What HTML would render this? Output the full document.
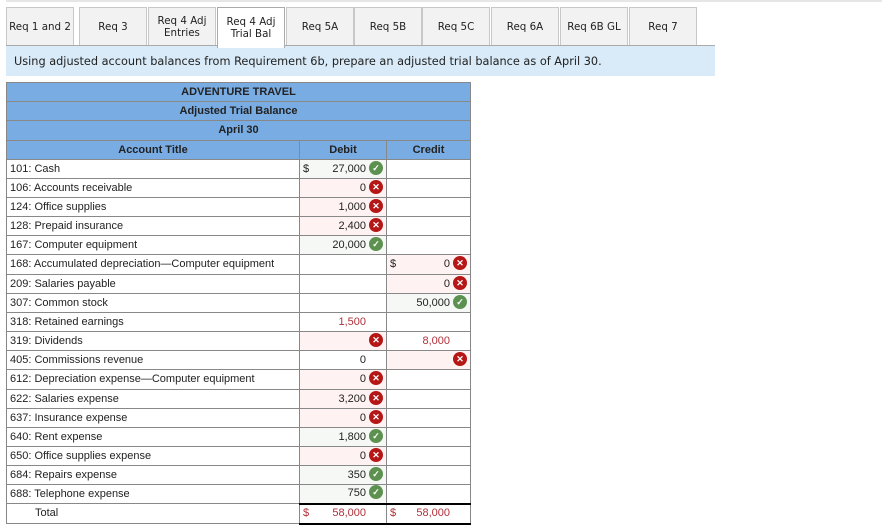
<!DOCTYPE html><html><head><style>
body{margin:0;width:882px;height:530px;background:#fff;font-family:"Liberation Sans",Arial,sans-serif;position:relative;overflow:hidden}
.topline{position:absolute;left:6px;top:0;width:876px;height:2px;background:#e6e6e6}
.tab{position:absolute;top:7px;height:38px;width:66px;background:#f2f2f2;border:1px solid #c8c8c8;border-bottom:none;font-family:"DejaVu Sans",Verdana,sans-serif;font-size:10.3px;color:#222;display:flex;align-items:center;justify-content:center;text-align:center;line-height:12px}
.tab.act{background:#fff;border-color:#aaa;height:40px;z-index:2}
.tabline{position:absolute;left:6px;top:45px;width:709px;height:1px;background:#aaa}
.banner{position:absolute;left:6px;top:46px;width:709px;height:30px;background:#d9ebf8;font-family:"DejaVu Sans",Verdana,sans-serif;font-size:11.3px;color:#222;line-height:32px;padding-left:8px;box-sizing:border-box}
table{position:absolute;left:6px;top:82px;border-collapse:collapse;font-size:11px;color:#222;table-layout:fixed}
td{border:1px solid #888;height:19px;padding:0 3px;box-sizing:border-box;white-space:nowrap;line-height:17px;overflow:hidden}
.h td{background:#79ace3;text-align:center;font-weight:bold;color:#222;height:19px}
.num{text-align:right;position:relative}
.g{background:#f5f8f4}.r{background:#fff2f2}
.ic{display:inline-block;width:14px;height:14px;border-radius:50%;vertical-align:middle;margin:-2px 0 0 3px;color:#fff;font-size:9px;line-height:14px;text-align:center;font-weight:bold}
.ok{background:#5c9150}.bad{background:#b51616}
.d{position:absolute;left:3px}
.red{color:#b0303a}
</style></head><body>
<div class="topline"></div>
<div class="tab" style="left:6px">Req 1 and 2</div>
<div class="tab" style="left:79px">Req 3</div>
<div class="tab" style="left:148px">Req 4 Adj<br>Entries</div>
<div class="tab act" style="left:217px">Req 4 Adj<br>Trial Bal</div>
<div class="tab" style="left:286px">Req 5A</div>
<div class="tab" style="left:354px">Req 5B</div>
<div class="tab" style="left:422px">Req 5C</div>
<div class="tab" style="left:491px">Req 6A</div>
<div class="tab" style="left:560px">Req 6B GL</div>
<div class="tab" style="left:629px">Req 7</div>
<div class="tabline"></div>
<div class="banner">Using adjusted account balances from Requirement 6b, prepare an adjusted trial balance as of April 30.</div>
<table>
<colgroup><col style="width:293px"><col style="width:87px"><col style="width:84px"></colgroup>
<tr class="h"><td colspan="3">ADVENTURE TRAVEL</td></tr>
<tr class="h"><td colspan="3">Adjusted Trial Balance</td></tr>
<tr class="h"><td colspan="3" style="height:20px">April 30</td></tr>
<tr class="h"><td>Account Title</td><td>Debit</td><td>Credit</td></tr>
<tr><td>101: Cash</td><td class="num g"><span class="d">$</span>27,000<span class="ic ok">✓</span></td><td></td></tr>
<tr><td>106: Accounts receivable</td><td class="num r">0<span class="ic bad">✕</span></td><td></td></tr>
<tr><td>124: Office supplies</td><td class="num r">1,000<span class="ic bad">✕</span></td><td></td></tr>
<tr><td>128: Prepaid insurance</td><td class="num r">2,400<span class="ic bad">✕</span></td><td></td></tr>
<tr><td>167: Computer equipment</td><td class="num g">20,000<span class="ic ok">✓</span></td><td></td></tr>
<tr><td style="height:20px">168: Accumulated depreciation—Computer equipment</td><td></td><td class="num r"><span class="d">$</span>0<span class="ic bad">✕</span></td></tr>
<tr><td>209: Salaries payable</td><td></td><td class="num r">0<span class="ic bad">✕</span></td></tr>
<tr><td>307: Common stock</td><td></td><td class="num g">50,000<span class="ic ok">✓</span></td></tr>
<tr><td>318: Retained earnings</td><td class="num red" style="padding-right:20px">1,500</td><td></td></tr>
<tr><td>319: Dividends</td><td class="num r"><span class="ic bad">✕</span></td><td class="num red" style="padding-right:20px">8,000</td></tr>
<tr><td>405: Commissions revenue</td><td class="num" style="padding-right:20px">0</td><td class="num r"><span class="ic bad">✕</span></td></tr>
<tr><td style="height:20px">612: Depreciation expense—Computer equipment</td><td class="num r">0<span class="ic bad">✕</span></td><td></td></tr>
<tr><td>622: Salaries expense</td><td class="num r">3,200<span class="ic bad">✕</span></td><td></td></tr>
<tr><td>637: Insurance expense</td><td class="num r">0<span class="ic bad">✕</span></td><td></td></tr>
<tr><td>640: Rent expense</td><td class="num g">1,800<span class="ic ok">✓</span></td><td></td></tr>
<tr><td>650: Office supplies expense</td><td class="num r">0<span class="ic bad">✕</span></td><td></td></tr>
<tr><td>684: Repairs expense</td><td class="num g">350<span class="ic ok">✓</span></td><td></td></tr>
<tr><td>688: Telephone expense</td><td class="num g">750<span class="ic ok">✓</span></td><td></td></tr>
<tr><td style="padding-left:28px;height:20px">Total</td><td class="num red" style="padding-right:20px;border-top:2px solid #000;border-bottom:2px solid #000"><span class="d">$</span>58,000</td><td class="num red" style="padding-right:20px;border-top:2px solid #000;border-bottom:2px solid #000"><span class="d">$</span>58,000</td></tr>
</table>
</body></html>
